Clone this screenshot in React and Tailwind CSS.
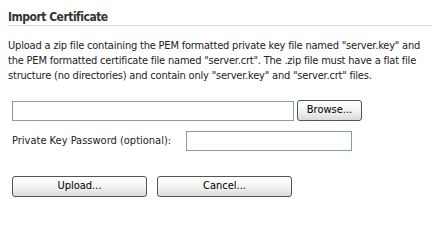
import React from "react"

const font = { fontFamily: "Tahoma, 'DejaVu Sans Condensed', 'Liberation Sans', sans-serif" }

const Btn = ({ children, className }) => (
  <button
    className={`h-[21px] rounded-[3px] border border-[#4d5560] bg-gradient-to-b from-white via-[#f3f3f0] to-[#dcdcd6] text-[11px] text-black ${className}`}
  >
    {children}
  </button>
)

const App = () => {
  return (
    <div className="w-[432px] h-[207px] bg-white text-[11px] text-[#222]" style={font}>
      <div className="pl-2 pt-[10px]">
        <h2 className="font-bold text-[12px] leading-[15px] tracking-[-0.5px] text-[#333]">Import Certificate</h2>
        <div className="h-px bg-[#d8d8d8]" />
      </div>
      <p className="px-2 pt-[12px] leading-[15px] tracking-[-0.2px] whitespace-nowrap">
        Upload a zip file containing the PEM formatted private key file named "server.key" and<br />
        the PEM formatted certificate file named "server.crt". The .zip file must have a flat file<br />
        structure (no directories) and contain only "server.key" and "server.crt" files.
      </p>
      <div className="pl-3 pt-[17px] flex items-center gap-[3px]">
        <div className="w-[282px] h-[20px] border border-[#7f9db9] bg-white" />
        <Btn className="w-[65px] h-[19px]">Browse...</Btn>
      </div>
      <div className="pl-3 pt-[10px] flex items-center">
        <span className="w-[174px]">Private Key Password (optional):</span>
        <div className="w-[166px] h-[20px] border border-[#7f9db9] bg-white" />
      </div>
      <div className="pl-3 pt-[25px] flex gap-[10px]">
        <Btn className="w-[135px]">Upload...</Btn>
        <Btn className="w-[135px]">Cancel...</Btn>
      </div>
    </div>
  )
}

export default App
